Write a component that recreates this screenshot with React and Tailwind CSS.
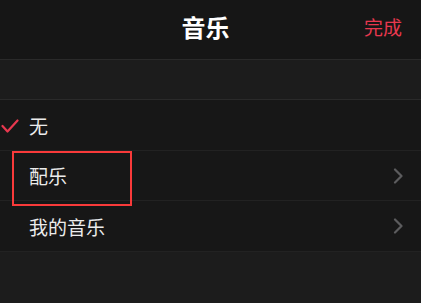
import React from 'react';

const font = { fontFamily: '"Noto Sans CJK SC", "Liberation Sans", sans-serif' };

function Chevron() {
  return (
    <svg width="10" height="16" viewBox="0 0 10 16" fill="none">
      <path d="M2 1.5 L8.5 8 L2 14.5" stroke="#5c5c5e" strokeWidth="2.2" strokeLinecap="round" strokeLinejoin="round" />
    </svg>
  );
}

function Check() {
  return (
    <svg width="18" height="14" viewBox="0 0 18 14" fill="none">
      <path d="M1.5 7 L6.5 12.5 L16.5 1.5" stroke="#e8384f" strokeWidth="2.2" strokeLinecap="round" strokeLinejoin="round" />
    </svg>
  );
}

export default function App() {
  return (
    <div className="w-[421px] h-[303px] bg-[#1c1c1c] overflow-hidden" style={font}>
      <div className="relative h-[60px] bg-[#161616] flex items-start justify-center pt-[15px] pr-[10px] border-b border-[#2a2a2a]">
        <span className="text-[24px] font-semibold text-white leading-none">音乐</span>
        <span className="absolute right-[19px] top-[17px] text-[19px] text-[#e8384f] leading-none">完成</span>
      </div>
      <div className="h-[40px] bg-[#1c1c1c] border-b border-[#2a2a2a]" />
      <div className="bg-[#171717]">
        <div className="h-[51px] flex items-center border-b border-[#222]">
          <div className="w-[29px] flex justify-start pl-[1px] pt-[2px]">
            <Check />
          </div>
          <span className="text-[19px] text-[#ececec] leading-none">无</span>
        </div>
        <div className="relative h-[50px] flex items-center justify-between border-b border-[#222] pl-[29px] pr-[18px]">
          <span className="text-[19px] text-[#ececec] leading-none">配乐</span>
          <Chevron />
          <div className="absolute left-[12px] top-[0px] w-[120px] h-[55px] border-2 border-[#f93a3a]" />
        </div>
        <div className="h-[51px] flex items-center justify-between border-b border-[#222] pl-[29px] pr-[18px]">
          <span className="text-[19px] text-[#ececec] leading-none">我的音乐</span>
          <Chevron />
        </div>
      </div>
    </div>
  );
}
